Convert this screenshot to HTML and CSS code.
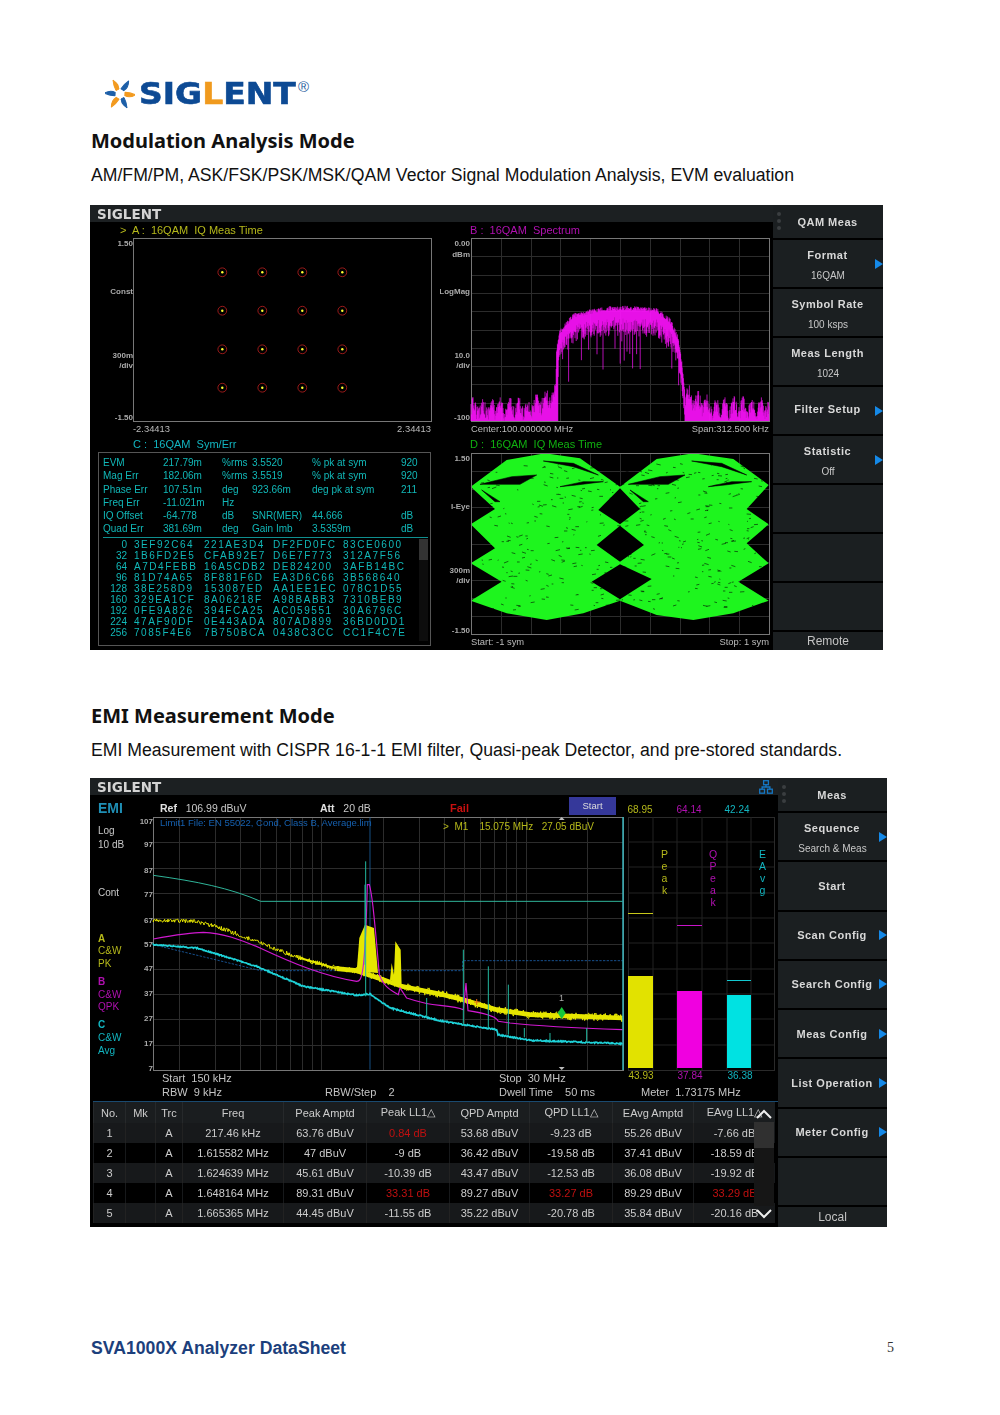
FILE: index.html
```html
<!DOCTYPE html>
<html lang="en">
  <head>
    <meta charset="utf-8">
    <title>SVA1000X Analyzer DataSheet</title>
    <link rel="stylesheet" href="styles.css">
  </head>
  <body>
    <div class="page">
      <div class="logo">
        <svg class="logo-swirl" width="30" height="30" viewBox="-15 -15 30 30">
          <g stroke-width="1" stroke-linejoin="round">
            <path d="M-1 -5Q-1 -10.500 -7 -14Q-6.500 -8 -4 -3.500Z" fill="#f29a1f" stroke="#f29a1f"/>
            <path d="M-1 -5Q-1 -10.500 -7 -14Q-6.500 -8 -4 -3.500Z" fill="#1d5fa8" stroke="#1d5fa8" transform="rotate(60)"/>
            <path d="M-1 -5Q-1 -10.500 -7 -14Q-6.500 -8 -4 -3.500Z" fill="#f29a1f" stroke="#f29a1f" transform="rotate(120)"/>
            <path d="M-1 -5Q-1 -10.500 -7 -14Q-6.500 -8 -4 -3.500Z" fill="#1d5fa8" stroke="#1d5fa8" transform="rotate(180)"/>
            <path d="M-1 -5Q-1 -10.500 -7 -14Q-6.500 -8 -4 -3.500Z" fill="#f29a1f" stroke="#f29a1f" transform="rotate(240)"/>
            <path d="M-1 -5Q-1 -10.500 -7 -14Q-6.500 -8 -4 -3.500Z" fill="#1d5fa8" stroke="#1d5fa8" transform="rotate(300)"/>
          </g>
        </svg>
        <span class="logo-text">SIG<span class="logo-l">L</span>ENT</span><span class="logo-reg">®</span>
      </div>

      <h2>Modulation Analysis Mode</h2>
      <p class="desc desc-qam">AM/FM/PM, ASK/FSK/PSK/MSK/QAM Vector Signal Modulation Analysis, EVM evaluation</p>

      <!-- QAM screen -->
      <div class="screen screen-qam">
        <div class="main">
          <div class="topbar"><span class="brand">SIGLENT</span></div>
          <div class="panes">
            <div class="pane">
              <div class="pane-title title-a">&gt;  A :  16QAM  IQ Meas Time</div>
              <svg class="plot" width="350" height="187">
                <rect class="frame" x="43.5" y="2.5" width="298" height="183"/>
                <text class="axis" x="43" y="10">1.50</text>
                <text class="axis" x="43" y="58">Const</text>
                <text class="axis" x="43" y="122">300m</text>
                <text class="axis" x="43" y="132">/div</text>
                <text class="axis" x="43" y="184">-1.50</text>
                <g id="constellation"></g>
              </svg>
              <div class="xlabels xlabels-a"><span>-2.34413</span><span>2.34413</span></div>
            </div>
            <div class="pane">
              <div class="pane-title title-b">B :  16QAM  Spectrum</div>
              <svg class="plot" width="333" height="187">
                <g id="gridB" class="grid"></g>
                <rect class="frame" x="31.5" y="2.5" width="298" height="183"/>
                <text class="axis" x="30" y="10">0.00</text>
                <text class="axis" x="30" y="21">dBm</text>
                <text class="axis" x="30" y="58">LogMag</text>
                <text class="axis" x="30" y="122">10.0</text>
                <text class="axis" x="30" y="132">/div</text>
                <text class="axis" x="30" y="184">-100</text>
                <path id="spectrum" class="spectrum"/>
              </svg>
              <div class="xlabels"><span>Center:100.000000 MHz</span><span>Span:312.500 kHz</span></div>
            </div>
            <div class="pane">
              <div class="pane-title title-c">C :  16QAM  Sym/Err</div>
              <div class="stats">
                <div class="stat-grid">
                  <span>EVM</span><span>217.79m</span><span>%rms</span><span>3.5520</span><span>% pk at sym</span><span>920</span>
                  <span>Mag Err</span><span>182.06m</span><span>%rms</span><span>3.5519</span><span>% pk at sym</span><span>920</span>
                  <span>Phase Err</span><span>107.51m</span><span>deg</span><span>923.66m</span><span>deg pk at sym</span><span>211</span>
                  <span>Freq Err</span><span>-11.021m</span><span>Hz</span><span></span><span></span><span></span>
                  <span>IQ Offset</span><span>-64.778</span><span>dB</span><span>SNR(MER)</span><span>44.666</span><span>dB</span>
                  <span>Quad Err</span><span>381.69m</span><span>deg</span><span>Gain Imb</span><span>3.5359m</span><span>dB</span>
                </div>
                <div class="hex-wrap">
                  <div class="hex-grid">
                    <span class="hex-i">0</span><span>3EF92C64</span><span>221AE3D4</span><span>DF2FD0FC</span><span>83CE0600</span>
                    <span class="hex-i">32</span><span>1B6FD2E5</span><span>CFAB92E7</span><span>D6E7F773</span><span>312A7F56</span>
                    <span class="hex-i">64</span><span>A7D4FEBB</span><span>16A5CDB2</span><span>DE824200</span><span>3AFB14BC</span>
                    <span class="hex-i">96</span><span>81D74A65</span><span>8F881F6D</span><span>EA3D6C66</span><span>3B568640</span>
                    <span class="hex-i">128</span><span>38E258D9</span><span>153087ED</span><span>AA1EE1EC</span><span>078C1D55</span>
                    <span class="hex-i">160</span><span>329EA1CF</span><span>8A06218F</span><span>A98BABB3</span><span>7310BEB9</span>
                    <span class="hex-i">192</span><span>0FE9A826</span><span>394FCA25</span><span>AC059551</span><span>30A6796C</span>
                    <span class="hex-i">224</span><span>47AF90DF</span><span>0E443ADA</span><span>807AD899</span><span>36BD0DD1</span>
                    <span class="hex-i">256</span><span>7085F4E6</span><span>7B750BCA</span><span>0438C3CC</span><span>CC1F4C7E</span>
                  </div>
                  <div class="hex-scroll"><div class="hex-thumb"></div></div>
                </div>
              </div>
            </div>
            <div class="pane">
              <div class="pane-title title-d">D :  16QAM  IQ Meas Time</div>
              <svg class="plot" width="333" height="185">
                <g id="gridD" class="grid"></g>
                <g transform="translate(0,-16) scale(.33333)">
                  <path class="eye" d="M92 155L200 75L315 55L420 70L540 155L650 72L760 55L880 72L986 150L920 222L986 268L920 325L986 385L895 440L986 497L880 535L760 555L650 540L540 497L430 535L320 555L200 535L92 497L185 440L92 385L165 340L92 268L165 222Z"/>
                  <path class="eye-hole" d="M540 160L600 222L540 268L475 225ZM540 272L612 330L540 380L470 330ZM540 388L635 432L540 493L455 440Z"/>
                  <path id="eyeSpecks" class="eye-specks"/>
                </g>
                <rect class="frame" x="31.5" y="2.5" width="298" height="181"/>
                <text class="axis" x="30" y="10">1.50</text>
                <text class="axis" x="30" y="58">I-Eye</text>
                <text class="axis" x="30" y="122">300m</text>
                <text class="axis" x="30" y="132">/div</text>
                <text class="axis" x="30" y="182">-1.50</text>
              </svg>
              <div class="xlabels"><span>Start: -1 sym</span><span>Stop: 1 sym</span></div>
            </div>
          </div>
        </div>
        <div class="softkeys">
          <div class="softkey softkey-head"><span class="dots"></span><b>QAM Meas</b></div>
          <div class="softkey more"><b>Format</b><small>16QAM</small></div>
          <div class="softkey"><b>Symbol Rate</b><small>100 ksps</small></div>
          <div class="softkey"><b>Meas Length</b><small>1024</small></div>
          <div class="softkey more"><b>Filter Setup</b></div>
          <div class="softkey more"><b>Statistic</b><small>Off</small></div>
          <div class="softkey"></div>
          <div class="softkey"></div>
          <div class="softkey"></div>
          <div class="softkey softkey-foot">Remote</div>
        </div>
      </div>

      <h2 class="second">EMI Measurement Mode</h2>
      <p class="desc">EMI Measurement with CISPR 16-1-1 EMI filter, Quasi-peak Detector, and pre-stored standards.</p>

      <!-- EMI screen -->
      <div class="screen screen-emi">
        <div class="main">
          <div class="topbar">
            <span class="brand">SIGLENT</span>
            <svg class="net-icon" width="14" height="14" viewBox="0 0 14 14" fill="none" stroke="#1577c4" stroke-width="1.3">
              <rect x="4.6" y=".7" width="4.8" height="4"/>
              <rect x=".7" y="9.2" width="4.8" height="4"/>
              <rect x="8.5" y="9.2" width="4.8" height="4"/>
              <path d="M7 4.7V7M3.1 9.2V7H10.9V9.2"/>
            </svg>
          </div>
          <div class="emi-top">
            <div class="emi-left">
              <div class="emi-head">
                <span class="emi-title">EMI</span>
                <span><b>Ref</b>   106.99 dBuV</span>
                <span><b>Att</b>   20 dB</span>
                <span class="fail">Fail</span>
                <span class="start-btn">Start</span>
              </div>
              <svg class="plot" width="537" height="257">
                <g id="gridE" class="grid"></g>
                <rect class="frame" x="63.5" y="2.5" width="470" height="253"/>
                <g class="side-text">
                  <text x="8" y="18.500">Log</text>
                  <text x="8" y="32.500">10 dB</text>
                  <text x="8" y="80.500">Cont</text>
                  <text class="tr-y" x="8" y="126.500"><tspan font-weight="bold">A</tspan></text>
                  <text class="tr-y" x="8" y="138.500">C&amp;W</text>
                  <text class="tr-y" x="8" y="151.500">PK</text>
                  <text class="tr-m" x="8" y="169.500"><tspan font-weight="bold">B</tspan></text>
                  <text class="tr-m" x="8" y="182.500">C&amp;W</text>
                  <text class="tr-m" x="8" y="194.500">QPK</text>
                  <text class="tr-c" x="8" y="212.500"><tspan font-weight="bold">C</tspan></text>
                  <text class="tr-c" x="8" y="225.500">C&amp;W</text>
                  <text class="tr-c" x="8" y="238.500">Avg</text>
                </g>
                <g class="axis">
                  <text x="63" y="9">107</text>
                  <text x="63" y="32">97</text>
                  <text x="63" y="58">87</text>
                  <text x="63" y="82">77</text>
                  <text x="63" y="108">67</text>
                  <text x="63" y="132">57</text>
                  <text x="63" y="156">47</text>
                  <text x="63" y="181">37</text>
                  <text x="63" y="206">27</text>
                  <text x="63" y="231">17</text>
                  <text x="63" y="256">7</text>
                </g>
                <g id="emiTraces" transform="translate(0,-37) scale(.33333)"></g>
                <path class="edge" d="M533 2V255"/>
                <text class="limit-text" x="70" y="11">Limit1 File: EN 55022, Cond, Class B, Average.lim</text>
                <text class="marker-text" x="353" y="15" xml:space="preserve">&gt;  M1    15.075 MHz   27.05 dBuV</text>
                <text class="marker-no" x="469" y="186">1</text>
                <path class="marker-tick" d="M471.700 2l-3 3h6zM471.700 255l-3-3h6z"/>
                <path class="marker-dot" d="M471.700 192l4 6-4 6-4-6z"/>
                <path class="marker-x" d="M384 187h6M386.700 184v6"/>
              </svg>
              <div class="emi-info">
                <span>Start  150 kHz</span><span></span><span>Stop  30 MHz</span>
                <span>RBW  9 kHz</span><span>RBW/Step    2</span><span>Dwell Time    50 ms</span>
              </div>
            </div>
            <div class="emi-right">
              <svg class="plot" width="151" height="283">
                <rect class="meter-frame" x="1.500" y="17.500" width="146" height="253"/>
                <path class="meter-grid" d="M26 17V270M50 17V270M75 17V270M100 17V270M124 17V270M1 42H147M1 67H147M1 93H147M1 118H147M1 143H147M1 169H147M1 194H147M1 219H147M1 245H147"/>
                <rect class="bar-y" x="1" y="176" width="25" height="92"/>
                <rect class="bar-m" x="50" y="191" width="25" height="77"/>
                <rect class="bar-c" x="100" y="195" width="24" height="73"/>
                <path class="line-y" d="M1 113.500H26"/>
                <path class="line-m" d="M50 125.500H75"/>
                <path class="line-c" d="M100 180.500H124"/>
                <g class="meter-num">
                  <text class="tr-y" x="13" y="12.500">68.95</text>
                  <text class="tr-m" x="62" y="12.500">64.14</text>
                  <text class="tr-c" x="110" y="12.500">42.24</text>
                  <text class="tr-y" x="14" y="279">43.93</text>
                  <text class="tr-m" x="63" y="279">37.84</text>
                  <text class="tr-c" x="113" y="279">36.38</text>
                </g>
                <g class="meter-letters">
                  <text class="tr-y"><tspan x="37.500" y="57.500">P</tspan><tspan x="37.500" y="69.500">e</tspan><tspan x="37.500" y="81.500">a</tspan><tspan x="37.500" y="93.500">k</tspan></text>
                  <text class="tr-m"><tspan x="86" y="57.500">Q</tspan><tspan x="86" y="69.500">P</tspan><tspan x="86" y="81.500">e</tspan><tspan x="86" y="93.500">a</tspan><tspan x="86" y="105.500">k</tspan></text>
                  <text class="tr-c"><tspan x="135.500" y="57.500">E</tspan><tspan x="135.500" y="69.500">A</tspan><tspan x="135.500" y="81.500">v</tspan><tspan x="135.500" y="93.500">g</tspan></text>
                </g>
              </svg>
              <div class="meter-label">Meter  1.73175 MHz</div>
            </div>
          </div>
          <div class="table-wrap">
            <table class="peaks">
              <colgroup>
                <col class="c-no"><col class="c-mk"><col class="c-trc"><col class="c-freq"><col class="c-amp">
                <col class="c-amp"><col class="c-qa"><col class="c-amp"><col class="c-ea"><col>
              </colgroup>
              <thead>
                <tr><th>No.</th><th>Mk</th><th>Trc</th><th>Freq</th><th>Peak Amptd</th><th>Peak LL1△</th><th>QPD Amptd</th><th>QPD LL1△</th><th>EAvg Amptd</th><th>EAvg LL1△</th></tr>
              </thead>
              <tbody>
                <tr><td>1</td><td></td><td>A</td><td>217.46 kHz</td><td>63.76 dBuV</td><td class="over">0.84 dB</td><td>53.68 dBuV</td><td>-9.23 dB</td><td>55.26 dBuV</td><td>-7.66 dB</td></tr>
                <tr><td>2</td><td></td><td>A</td><td>1.615582 MHz</td><td>47 dBuV</td><td>-9 dB</td><td>36.42 dBuV</td><td>-19.58 dB</td><td>37.41 dBuV</td><td>-18.59 dB</td></tr>
                <tr><td>3</td><td></td><td>A</td><td>1.624639 MHz</td><td>45.61 dBuV</td><td>-10.39 dB</td><td>43.47 dBuV</td><td>-12.53 dB</td><td>36.08 dBuV</td><td>-19.92 dB</td></tr>
                <tr><td>4</td><td></td><td>A</td><td>1.648164 MHz</td><td>89.31 dBuV</td><td class="over">33.31 dB</td><td>89.27 dBuV</td><td class="over">33.27 dB</td><td>89.29 dBuV</td><td class="over">33.29 dB</td></tr>
                <tr><td>5</td><td></td><td>A</td><td>1.665365 MHz</td><td>44.45 dBuV</td><td>-11.55 dB</td><td>35.22 dBuV</td><td>-20.78 dB</td><td>35.84 dBuV</td><td>-20.16 dB</td></tr>
              </tbody>
            </table>
            <div class="table-scroll">
              <svg width="20" height="122" viewBox="0 0 20 122" fill="none" stroke="#eee" stroke-width="2">
                <path d="M3 16L10 9L17 16"/>
                <path d="M3 108L10 115L17 108"/>
              </svg>
              <div class="table-track"><div class="table-thumb"></div></div>
            </div>
          </div>
        </div>
        <div class="softkeys">
          <div class="softkey softkey-head"><span class="dots"></span><b>Meas</b></div>
          <div class="softkey more"><b>Sequence</b><small>Search &amp; Meas</small></div>
          <div class="softkey"><b>Start</b></div>
          <div class="softkey more"><b>Scan Config</b></div>
          <div class="softkey more"><b>Search Config</b></div>
          <div class="softkey more"><b>Meas Config</b></div>
          <div class="softkey more"><b>List Operation</b></div>
          <div class="softkey more"><b>Meter Config</b></div>
          <div class="softkey"></div>
          <div class="softkey softkey-foot">Local</div>
        </div>
      </div>

      <footer>
        <span class="doc-name">SVA1000X Analyzer DataSheet</span>
        <span class="page-no">5</span>
      </footer>
    </div>
    <script src="charts.js"></script>
  </body>
</html>
```

FILE: styles.css
```css
html, body {
  margin: 0;
  padding: 0;
  background-color: #fff;
}

.page {
  width: 1000px;
  height: 1415px;
  padding: 79px 0 0 90px;
  box-sizing: border-box;
  overflow: hidden;
  font-family: 'Liberation Sans', Arial, sans-serif;
  color: #111;
}

/* logo */
.logo {
  display: flex;
  align-items: center;
  height: 30px;
  margin-left: 15px;
}

.logo-swirl {
  flex: none;
  margin-right: 4px;
}

.logo-text {
  display: inline-block;
  width: 159px;
  font-family: 'DejaVu Sans', sans-serif;
  font-weight: bold;
  font-size: 30px;
  line-height: 30px;
  color: #0d4a94;
  -webkit-text-stroke: .6px #0d4a94;
  transform: scaleX(1.1);
  transform-origin: left center;
}

.logo-l {
  color: #f09a1e;
  -webkit-text-stroke: .6px #f09a1e;
}

.logo-reg {
  align-self: flex-start;
  font-size: 15px;
  line-height: 15px;
  color: #2a5f9f;
}

h2 {
  margin: 18px 0 8px 1px;
  font-family: 'Noto Sans', sans-serif;
  font-size: 20px;
  line-height: 28px;
  font-weight: bold;
  color: #111;
}

h2.second {
  margin-top: 52px;
}

.desc {
  margin: 0 0 16px 1px;
  font-size: 17.65px;
  line-height: 24px;
}

.desc-qam {
  margin-bottom: 18px;
}

/* instrument screens */
.screen {
  display: flex;
  background-color: #000;
  color: #bbb;
  font-size: 10px;
  filter: blur(.35px);
}

.screen-qam {
  width: 793px;
  height: 445px;
}

.screen-emi {
  width: 797px;
  height: 449px;
}

.main {
  flex: 1;
  display: flex;
  flex-direction: column;
  min-width: 0;
}

.topbar {
  flex: none;
  display: flex;
  align-items: center;
  justify-content: space-between;
  height: 17px;
  padding: 0 5px 0 7px;
  background-color: #1c2022;
}

.brand {
  font-family: 'DejaVu Sans', sans-serif;
  font-weight: bold;
  font-size: 13.5px;
  color: #d4d4d4;
}

.net-icon {
  display: block;
}

.panes {
  display: grid;
  grid-template-columns: 350px 333px;
  grid-template-rows: 214px 1fr;
}

.pane-title {
  height: 14px;
  line-height: 16px;
  padding-left: 30px;
  font-size: 11px;
  white-space: pre;
}

.title-a { color: #b5b81a; }
.title-b { color: #b010b0; }
.title-c { color: #12b5c0; padding-left: 43px; height: 16px; line-height: 17px; }
.title-d { color: #10b010; height: 15px; line-height: 17px; }

.plot {
  display: block;
}

.frame {
  fill: none;
  stroke: #777;
}

.axis {
  fill: #aaa;
  font-size: 8px;
  font-weight: bold;
  text-anchor: end;
}

.grid {
  stroke: #2c2c2c;
  stroke-width: 1;
}

.spectrum {
  fill: none;
  stroke: #ff14ff;
  stroke-width: .7;
}

.eye {
  fill: #1ef51e;
}

.eye-hole {
  fill: #000;
}

.eye-specks {
  fill: #000;
  stroke: #000;
  stroke-width: 1.7;
}

.xlabels {
  display: flex;
  justify-content: space-between;
  width: 298px;
  margin-left: 31px;
  font-size: 9.4px;
  line-height: 12px;
  color: #bbb;
}

.xlabels-a {
  margin-left: 43px;
}

/* symbol / error table */
.stats {
  box-sizing: border-box;
  width: 333px;
  height: 194px;
  margin-left: 8px;
  padding: 3px 2px 0 4px;
  border: 1px solid #555;
  color: #11b8b8;
}

.stat-grid {
  display: grid;
  grid-template-columns: 60px 59px 30px 60px 89px 1fr;
  grid-auto-rows: 13.3px;
  line-height: 13.3px;
  padding-bottom: 1px;
  border-bottom: 1px solid #0f8f8f;
}

.hex-wrap {
  display: flex;
  justify-content: space-between;
  padding-top: 1px;
}

.hex-grid {
  display: grid;
  grid-template-columns: 24px 70px 69px 70px 70px;
  grid-auto-rows: 11.07px;
  line-height: 11.07px;
  letter-spacing: 1.55px;
  white-space: pre;
}

.hex-grid span {
  padding-left: 7px;
}

.hex-grid .hex-i {
  padding: 0;
  text-align: right;
  letter-spacing: 0;
}

.hex-scroll {
  width: 9px;
  height: 102px;
  background-color: #0d0d0d;
}

.hex-thumb {
  height: 21px;
  background-color: #333;
}

/* soft keys */
.softkeys {
  flex: none;
  display: flex;
  flex-direction: column;
  gap: 2px;
  width: 110px;
}

.screen-emi .softkeys {
  width: 109px;
}

.softkey {
  flex: 1;
  position: relative;
  display: flex;
  flex-direction: column;
  align-items: center;
  justify-content: center;
  gap: 8px;
  background-color: #1b1f21;
  color: #d8d8d8;
}

.softkey b {
  font-size: 11px;
  letter-spacing: .5px;
  line-height: 12px;
  padding-right: 1px;
}

.screen-qam .softkey b:only-child {
  margin-bottom: 3px;
}

.softkey small {
  margin: 1px 0 -3px;
  font-size: 10px;
  line-height: 11px;
  color: #c8c8c8;
}

.softkey-head {
  flex: none;
  height: 33px;
}

.softkey-foot {
  flex: none;
  height: 18px;
  font-size: 12px;
  color: #c4c4c4;
}

.screen-emi .softkey-foot {
  height: 20px;
}

.more::after {
  content: "";
  position: absolute;
  right: 0;
  top: 50%;
  margin-top: -5px;
  border-left: 8px solid #1589e8;
  border-top: 5px solid transparent;
  border-bottom: 5px solid transparent;
}

.dots {
  position: absolute;
  left: 4px;
  top: 7px;
  width: 4px;
  height: 4px;
  border-radius: 50%;
  background-color: #3a3e40;
  box-shadow: 0 7px 0 #3a3e40, 0 14px 0 #3a3e40;
}

/* EMI */
.emi-top {
  display: flex;
  height: 306px;
}

.emi-left {
  width: 537px;
  flex: none;
}

.emi-right {
  width: 151px;
  flex: none;
  padding-top: 5px;
  box-sizing: border-box;
}

.emi-head {
  display: grid;
  grid-template-columns: 62px 160px 130px 119px 47px;
  align-items: center;
  height: 20px;
  padding-left: 8px;
  font-size: 10.5px;
  white-space: pre;
  color: #c8c8c8;
}

.emi-head span {
  padding-top: 5px;
}

.emi-head b {
  color: #e0e0e0;
}

.emi-title {
  font-size: 14px;
  font-weight: bold;
  color: #1f8fb5;
}

.emi-head .fail {
  font-weight: bold;
  color: #c81010;
  font-size: 11px;
}

.emi-head .start-btn {
  height: 18px;
  padding: 0;
  line-height: 17px;
  text-align: center;
  background-color: #35389a;
  color: #ddd;
  font-size: 9.5px;
}

.side-text {
  font-size: 10px;
  fill: #c8c8c8;
}

.tr-y { fill: #b5b81a; color: #b5b81a; }
.tr-m { fill: #b010b0; color: #b010b0; }
.tr-c { fill: #12b5c0; color: #12b5c0; }

.limit-text {
  fill: #1560b0;
  font-size: 9.5px;
}

.marker-text {
  fill: #b5b81a;
  font-size: 10px;
}

.marker-no {
  fill: #aaa;
  font-size: 9px;
}

.marker-tick {
  fill: #bbb;
}

.marker-dot {
  fill: #16c83c;
}

.marker-x {
  fill: none;
  stroke: #e06a10;
  stroke-width: 1;
}

.edge {
  fill: none;
  stroke: #35b0b8;
  stroke-width: 1.5;
}

.emi-info {
  display: grid;
  grid-template-columns: 163px 174px 1fr;
  grid-auto-rows: 14px;
  line-height: 14px;
  margin-top: -1px;
  padding-left: 72px;
  white-space: pre;
  font-size: 11px;
  color: #c4c4c4;
}

.meter-frame {
  fill: none;
  stroke: #2a2a2a;
}

.meter-grid {
  fill: none;
  stroke: #222;
}

.bar-y { fill: #e2e200; }
.bar-m { fill: #f000e0; }
.bar-c { fill: #00e2e2; }

.line-y { stroke: #c8c81a; }
.line-m { stroke: #c814c8; }
.line-c { stroke: #12c8d0; }

.meter-num {
  font-size: 10px;
  text-anchor: middle;
}

.meter-letters {
  font-size: 10.5px;
  text-anchor: middle;
}

.meter-label {
  margin-top: 2px;
  padding-left: 14px;
  line-height: 14px;
  font-size: 11px;
  white-space: pre;
  color: #c4c4c4;
}

/* peak table */
.table-wrap {
  position: relative;
  box-sizing: border-box;
  width: 685px;
  height: 126px;
  margin-left: 3px;
  border-top: 1px solid #1a4a70;
  overflow: hidden;
}

.peaks {
  width: 682px;
  table-layout: fixed;
  border-collapse: collapse;
  font-size: 11px;
  color: #ccc;
}

.peaks th {
  height: 21px;
  padding: 0;
  font-weight: normal;
  background-color: #1a1d1f;
  border-left: 1px solid #26292b;
}

.peaks td {
  height: 20px;
  padding: 0;
  text-align: center;
  white-space: nowrap;
  overflow: hidden;
  border-left: 1px solid #17191b;
}

.peaks tbody tr:nth-child(odd) td {
  background-color: #17191b;
  border-left-color: #222;
}

.peaks .over {
  color: #c01010;
}

.c-no { width: 32px; }
.c-mk { width: 30px; }
.c-trc { width: 27px; }
.c-freq { width: 101px; }
.c-amp { width: 83px; }
.c-qa { width: 80px; }
.c-ea { width: 81px; }

.table-scroll {
  position: absolute;
  left: 661px;
  top: 0;
  width: 20px;
  height: 122px;
}

.table-scroll svg {
  position: absolute;
  left: 0;
  top: 0;
}

.table-track {
  margin-top: 20px;
  height: 84px;
  background-color: #161616;
}

.table-thumb {
  height: 26px;
  background-color: #303030;
}

footer {
  display: flex;
  justify-content: space-between;
  align-items: center;
  width: 803px;
  height: 24px;
  margin: 109px 0 0 1px;
}

.doc-name {
  font-size: 17.65px;
  font-weight: bold;
  color: #1c3f7c;
}

.page-no {
  font-family: 'Liberation Serif', serif;
  font-size: 14px;
  color: #333;
}
```

FILE: charts.js
```js
// small seeded random so the traces come out the same every time
var seed = 12345;
function rnd() {
  seed = (seed * 16807) % 2147483647;
  return seed / 2147483647;
}
function between(a, b) {
  return a + rnd() * (b - a);
}

var NS = 'http://www.w3.org/2000/svg';
function add(parent, tag, attrs) {
  var el = document.createElementNS(NS, tag);
  for (var k in attrs) el.setAttribute(k, attrs[k]);
  parent.appendChild(el);
  return el;
}

// linear interpolation over [x, y] points
function lerp(points, x) {
  for (var i = 1; i < points.length; i++) {
    if (x <= points[i][0]) {
      var a = points[i - 1], b = points[i];
      var t = (x - a[0]) / (b[0] - a[0]);
      return a[1] + t * (b[1] - a[1]);
    }
  }
  return points[points.length - 1][1];
}

function drawGrid(id, x0, y0, w, h, nx, ny) {
  var d = '';
  for (var i = 1; i < nx; i++) {
    var x = Math.round(x0 + w * i / nx) + 0.5;
    d += 'M' + x + ' ' + y0 + 'V' + (y0 + h);
  }
  for (var j = 1; j < ny; j++) {
    var y = Math.round(y0 + h * j / ny) + 0.5;
    d += 'M' + x0 + ' ' + y + 'H' + (x0 + w);
  }
  add(document.getElementById(id), 'path', { d: d, fill: 'none' });
}

// pane A
var constel = document.getElementById('constellation');
[132.3, 172.3, 212.3, 252.3].forEach(function (x) {
  [36.3, 74.7, 113.3, 151.7].forEach(function (y) {
    add(constel, 'circle', { cx: x, cy: y, r: 4.4, fill: 'none', stroke: '#a81c1c', 'stroke-width': 0.9 });
    add(constel, 'circle', { cx: x, cy: y, r: 1.2, fill: '#ffff30' });
  });
});

// pane B
drawGrid('gridB', 31, 2, 298, 183, 10, 10);
var band = [[345, 640], [350, 430], [360, 380], [400, 330], [490, 310], [570, 308], [650, 315], [690, 345], [715, 400], [725, 470], [735, 570]];
var spec = '';
for (var sx = 31; sx <= 329; sx += 0.4) {
  var y1, y2 = 185;
  if (sx < 115.5 || sx > 245) {
    var edge = sx < 115.5 ? Math.max(0, (sx - 90) / 25) : Math.max(0, (270 - sx) / 25);
    y1 = 172 - 14 * edge + between(-7, 9) + 5 * Math.sin(sx * 0.7);
  } else {
    y1 = lerp(band, sx * 3) / 3 - 31 + between(-2, 3);
    y2 = y1 + between(10, 26);
    if (rnd() < 0.05) y2 += between(12, 40);
    if (sx < 118) y2 = 185;
  }
  spec += 'M' + sx.toFixed(1) + ' ' + y1.toFixed(1) + 'V' + y2.toFixed(1);
}
document.getElementById('spectrum').setAttribute('d', spec);

// pane D
drawGrid('gridD', 31, 2, 298, 181, 10, 10);
var s = 'M120 148L215 125L290 120L240 148ZM310 78L400 85L475 120L400 95ZM360 155L430 140L490 140L410 150ZM125 165L180 200L165 200Z' +
  'M565 148L660 125L735 120L685 148ZM755 78L845 85L920 120L845 95ZM805 155L875 140L935 140L855 150ZM570 165L625 200L610 200Z';
for (var i = 0; i < 430; i++) {
  var ex = between(110, 970), ey = between(85, 525);
  var len = between(3, 13), slope = between(-0.4, 0.4);
  s += 'M' + ex.toFixed(0) + ' ' + ey.toFixed(0) + 'l' + len.toFixed(0) + ' ' + (len * slope).toFixed(0);
}
document.getElementById('eyeSpecks').setAttribute('d', s);

// EMI plot, grid is log in x
var gridE = '';
var f = [200, 300, 400, 500, 600, 700, 800, 900, 1000, 2000, 3000, 4000, 5000, 6000, 7000, 8000, 9000, 10000, 20000];
f.forEach(function (k) {
  var gx = Math.round(63 + 204.3 * Math.log10(k / 150)) + 0.5;
  gridE += 'M' + gx + ' 2V255';
});
for (var g = 1; g < 10; g++) {
  var gy = Math.round(2 + 25.3 * g) + 0.5;
  gridE += 'M63 ' + gy + 'H533';
}
add(document.getElementById('gridE'), 'path', { d: gridE, fill: 'none' });

// trace points are [x, y, noise] in units of 1/3 px
var traces = document.getElementById('emiTraces');

function noisy(points, step) {
  var out = 'M' + points[0][0] + ' ' + points[0][1];
  var p = 0;
  for (var x = points[0][0]; x <= points[points.length - 1][0]; x += step) {
    while (p < points.length - 2 && x > points[p + 1][0]) p++;
    var a = points[p], b = points[p + 1];
    var t = (x - a[0]) / (b[0] - a[0]);
    var y = a[1] + t * (b[1] - a[1]);
    var amp = (a[2] || 0) + t * ((b[2] || 0) - (a[2] || 0));
    out += 'L' + x.toFixed(1) + ' ' + (y + between(-amp, amp)).toFixed(1);
  }
  return out;
}
function line(d, color, width, extra) {
  var attrs = { d: d, fill: 'none', stroke: color, 'stroke-width': width };
  for (var k in extra) attrs[k] = extra[k];
  add(traces, 'path', attrs);
}

// markers and limits
line('M840 118V875', '#1a5f9e', 2.5);
line('M190 292C320 310 420 330 512 370H1598', '#2fb59a', 3);
line('M190 500L512 578H1118M1118 578V548H1598', '#1a5fa8', 2.5, { 'stroke-dasharray': '7 4' });

// yellow trace, a solid band under the noise where the trace gets thick
line('M630 540L740 572', '#e6e600', 6);
line('M740 572L800 578L880 605L935 625L1050 648L1120 665L1220 695L1320 710L1598 720', '#e6e600', 14);
line(noisy([[190, 427, 5], [320, 430, 6], [400, 452, 7], [510, 495, 6], [630, 540, 7], [740, 572, 8], [800, 578, 9], [880, 605, 11], [935, 625, 12], [1050, 648, 12], [1120, 665, 12], [1220, 695, 12], [1320, 710, 12], [1598, 720, 12]], 2), '#e6e600', 3);
add(traces, 'polygon', { points: '800,580 808,480 825,440 852,450 864,585', fill: '#e6e600' });
add(traces, 'polygon', { points: '900,605 905,555 912,590 916,490 932,515 935,625', fill: '#e6e600' });

// magenta trace
line('M190 483C260 470 300 463 340 463C400 465 450 485 510 510C600 552 700 595 800 610C815 610 825 600 832 320L838 320C845 345 850 380 868 590C880 625 900 635 925 650L930 630L950 660C980 670 1020 680 1050 682C1080 685 1110 690 1120 695L1128 615L1134 698C1180 705 1220 715 1225 730L1260 735C1350 745 1450 750 1598 755', '#d018d0', 3.5);

// cyan trace
line(noisy([[190, 500, 1.5], [320, 510, 2], [500, 565, 2], [640, 625, 2], [800, 652, 2], [840, 648, 2], [900, 690, 2], [1050, 728, 2], [1120, 740, 2], [1220, 755, 2], [1224, 770, 2], [1320, 787, 2], [1598, 797, 2]], 2), '#1ed2d8', 5);

// spikes on the average trace
[[827, 250, 655], [825, 320, 560], [1010, 660, 715], [1120, 515, 740], [1195, 565, 750], [1255, 620, 770], [1303, 750, 778], [1380, 765, 790], [1490, 750, 795]].forEach(function (sp) {
  line('M' + sp[0] + ' ' + sp[1] + 'V' + sp[2], '#22b8a0', 3);
});
```
